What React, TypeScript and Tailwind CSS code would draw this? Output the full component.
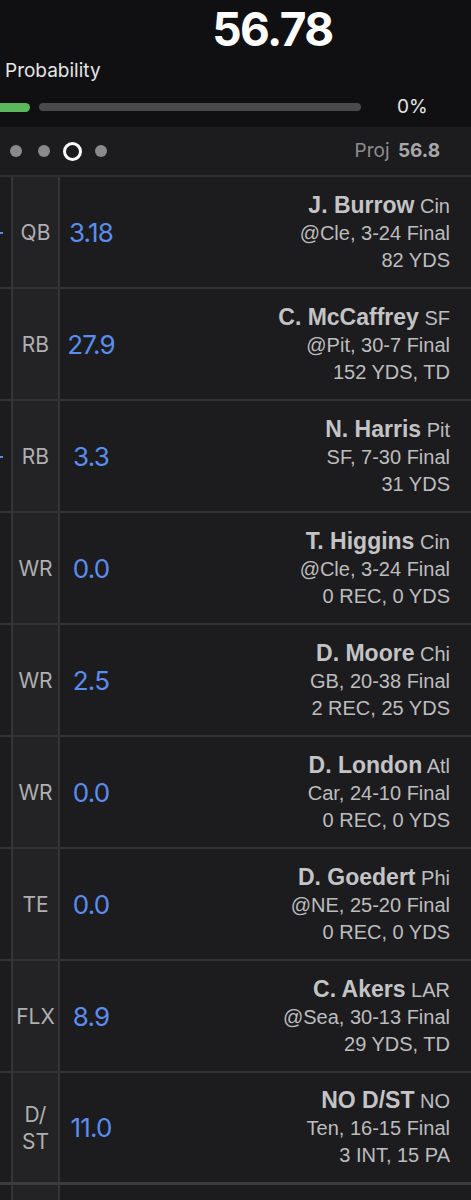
import React from 'react'

type Row = {
  pos: string
  score: string
  name: string
  team: string
  game: string
  stats: string
  tick?: boolean
}

const ROWS: Row[] = [
  { pos: 'QB', score: '3.18', name: 'J. Burrow', team: 'Cin', game: '@Cle, 3-24 Final', stats: '82 YDS', tick: true },
  { pos: 'RB', score: '27.9', name: 'C. McCaffrey', team: 'SF', game: '@Pit, 30-7 Final', stats: '152 YDS, TD' },
  { pos: 'RB', score: '3.3', name: 'N. Harris', team: 'Pit', game: 'SF, 7-30 Final', stats: '31 YDS', tick: true },
  { pos: 'WR', score: '0.0', name: 'T. Higgins', team: 'Cin', game: '@Cle, 3-24 Final', stats: '0 REC, 0 YDS' },
  { pos: 'WR', score: '2.5', name: 'D. Moore', team: 'Chi', game: 'GB, 20-38 Final', stats: '2 REC, 25 YDS' },
  { pos: 'WR', score: '0.0', name: 'D. London', team: 'Atl', game: 'Car, 24-10 Final', stats: '0 REC, 0 YDS' },
  { pos: 'TE', score: '0.0', name: 'D. Goedert', team: 'Phi', game: '@NE, 25-20 Final', stats: '0 REC, 0 YDS' },
  { pos: 'FLX', score: '8.9', name: 'C. Akers', team: 'LAR', game: '@Sea, 30-13 Final', stats: '29 YDS, TD' },
  { pos: 'D/ ST', score: '11.0', name: 'NO D/ST', team: 'NO', game: 'Ten, 16-15 Final', stats: '3 INT, 15 PA' },
]

function PlayerRow({ r, last }: { r: Row; last?: boolean }) {
  return (
    <div
      className={`grid grid-cols-[11px_2px_45px_2px_1fr] h-[112px] ${
        last ? 'border-b-[3px] border-[#3c3c3e]' : 'border-b-2 border-[#333335]'
      }`}
    >
      <div className="flex items-center">
        {r.tick && <div className="w-[3px] h-[2px] bg-[#5b8def] mt-[2px]" />}
      </div>
      <div className="bg-[#353537]" />
      <div className="bg-[#232325] flex items-center justify-center text-center font-['Inter',sans-serif] text-[21px] leading-[27px] text-[#b0b0b2] px-1">
        {r.pos === 'D/ ST' ? (
          <span>
            D/
            <br />
            ST
          </span>
        ) : (
          r.pos
        )}
      </div>
      <div className="bg-[#353537]" />
      <div className="flex items-center justify-between pr-[21px]">
        <span className="w-[62px] text-center font-['Inter',sans-serif] text-[26px] text-[#5b8def] tracking-[-0.8px]">
          {r.score}
        </span>
        <div className="text-right font-['Liberation_Sans',Arial,sans-serif] text-[#bdbdbf] leading-[27px] pt-[1px]">
          <div className="text-[20px]">
            <span className="font-bold text-[23px] text-[#c4c4c6]">{r.name}</span> {r.team}
          </div>
          <div className="text-[20px]">{r.game}</div>
          <div className="text-[20px]">{r.stats}</div>
        </div>
      </div>
    </div>
  )
}

export default function App() {
  return (
    <div className="w-[471px] h-[1200px] overflow-hidden bg-[#1c1c1e]">
      {/* header */}
      <div className="bg-[#101012] h-[127px] relative">
        <div className="flex justify-center pl-[74px] pt-[3px]">
          <span className="font-['Inter',sans-serif] font-bold text-[46px] leading-[52px] text-white tracking-[-1.5px]">
            56.78
          </span>
        </div>
        <div className="pl-[5px] pt-[3px] font-['Inter',sans-serif] text-[19px] leading-[26px] text-[#e6e6e6]">
          Probability
        </div>
        <div className="flex items-center mt-[9px]">
          <div className="w-[30px] h-[9px] rounded-r-full bg-[#5cb85c]" />
          <div className="ml-[9px] w-[322px] h-[8px] rounded-full bg-[#4a4a4c]" />
          <span className="ml-[36px] font-['Inter',sans-serif] text-[19px] text-[#e6e6e6]">0%</span>
        </div>
      </div>

      {/* pager band */}
      <div className="h-[50px] flex items-center justify-between border-b-2 border-[#2e2e30] pl-[10px] pr-[31px]">
        <div className="flex items-center">
          <div className="w-[12px] h-[12px] rounded-full bg-[#8a8a8c]" />
          <div className="ml-[16px] w-[12px] h-[12px] rounded-full bg-[#8a8a8c]" />
          <div className="ml-[13px] w-[19px] h-[19px] rounded-full border-[3.5px] border-white" />
          <div className="ml-[13px] w-[12px] h-[12px] rounded-full bg-[#8a8a8c]" />
        </div>
        <div className="font-['Inter',sans-serif] text-[19px] text-[#8e8e90]">
          Proj <span className="font-bold text-[#a8a8aa] ml-[3px]">56.8</span>
        </div>
      </div>

      {/* roster */}
      {ROWS.map((r, i) => (
        <PlayerRow key={i} r={r} last={i === ROWS.length - 1} />
      ))}
      <div className="grid grid-cols-[11px_2px_45px_2px_1fr] h-[40px]">
        <div />
        <div className="bg-[#353537]" />
        <div className="bg-[#232325]" />
        <div className="bg-[#353537]" />
        <div />
      </div>
    </div>
  )
}
